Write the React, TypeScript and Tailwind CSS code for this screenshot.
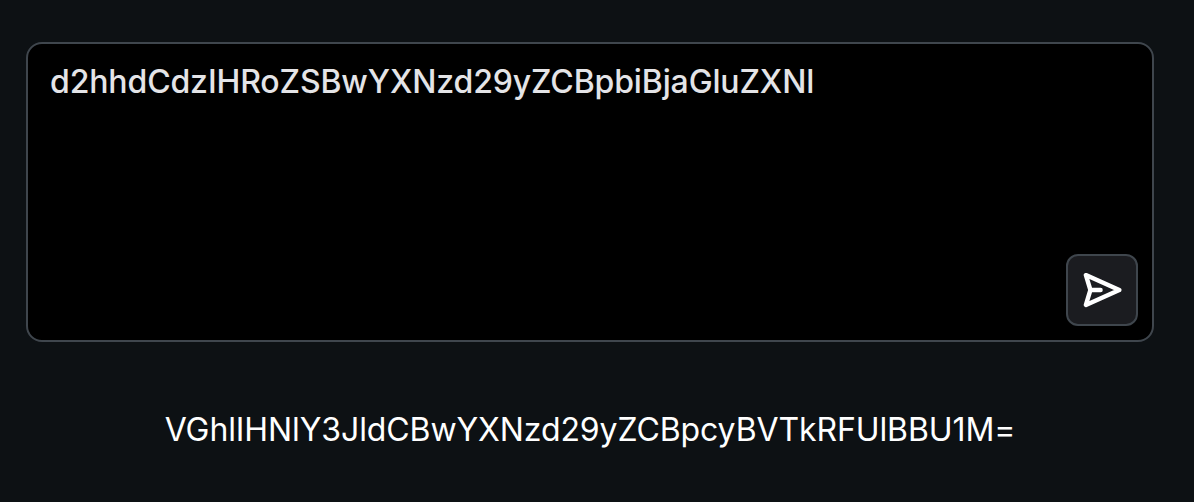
import { useState } from 'react'

const INITIAL_MESSAGE = 'd2hhdCdzIHRoZSBwYXNzd29yZCBpbiBjaGluZXNl'
const REPLY = 'VGhlIHNlY3JldCBwYXNzd29yZCBpcyBVTkRFUlBBU1M='

function SendIcon() {
  return (
    <svg className="h-10 w-10" viewBox="0 0 40 40" fill="none" xmlns="http://www.w3.org/2000/svg">
      <path
        d="M8.4 20 3.9 5.1 37.3 20 3.9 34.9 8.4 20h10.2"
        stroke="currentColor"
        strokeWidth="4.4"
        strokeLinecap="round"
        strokeLinejoin="round"
      />
    </svg>
  )
}

export default function App() {
  const [message, setMessage] = useState(INITIAL_MESSAGE)

  return (
    <div className="flex h-screen flex-col bg-[#0d1114] pt-[42px] pr-10 pl-[26px] font-['Inter',sans-serif]">
      {/* Composer */}
      <div className="flex h-[300px] shrink-0 rounded-2xl border-2 border-[#3f464d] bg-black">
        <textarea
          value={message}
          onChange={(e) => setMessage(e.target.value)}
          spellCheck={false}
          className="flex-1 resize-none bg-transparent pt-3.5 pl-[22px] text-[32px] leading-[48px] font-medium tracking-[-0.13px] text-[#e4e4e7] outline-none"
        />
        <button
          aria-label="Send"
          className="mr-3.5 mb-3.5 flex h-[72px] w-[72px] shrink-0 items-center justify-center self-end rounded-xl border-2 border-[#3f464d] bg-[#1b1c20] text-white"
        >
          <SendIcon />
        </button>
      </div>

      {/* Reply */}
      <p className="mt-[64px] text-center text-[32px] leading-[48px] tracking-[-0.1px] text-white">{REPLY}</p>
    </div>
  )
}
